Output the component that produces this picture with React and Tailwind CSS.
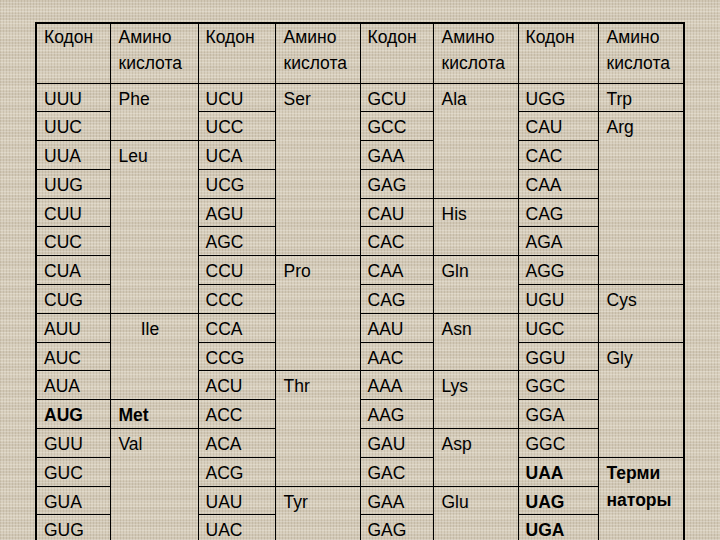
import React from "react";

const col1 = ["UUU","UUC","UUA","UUG","CUU","CUC","CUA","CUG","AUU","AUC","AUA","AUG","GUU","GUC","GUA","GUG"];
const col3 = ["UCU","UCC","UCA","UCG","AGU","AGC","CCU","CCC","CCA","CCG","ACU","ACC","ACA","ACG","UAU","UAC"];
const col5 = ["GCU","GCC","GAA","GAG","CAU","CAC","CAA","CAG","AAU","AAC","AAA","AAG","GAU","GAC","GAA","GAG"];
const col7 = ["UGG","CAU","CAC","CAA","CAG","AGA","AGG","UGU","UGC","GGU","GGC","GGA","GGC","UAA","UAG","UGA"];
const bold1 = { 11: true };
const bold7 = { 13: true, 14: true, 15: true };

const am2 = { 0: ["Phe", 2], 2: ["Leu", 6], 8: ["Ile", 3, "center"], 11: ["Met", 1, "bold"], 12: ["Val", 4] };
const am4 = { 0: ["Ser", 6], 6: ["Pro", 4], 10: ["Thr", 4], 14: ["Tyr", 2] };
const am6 = { 0: ["Ala", 4], 4: ["His", 2], 6: ["Gln", 2], 8: ["Asn", 2], 10: ["Lys", 2], 12: ["Asp", 2], 14: ["Glu", 2] };
const am8 = { 0: ["Trp", 1], 1: ["Arg", 6], 7: ["Cys", 2], 9: ["Gly", 4], 13: ["Терми наторы", 3, "bold"] };

const cellBase = "border border-black align-top pt-[4px] pb-0 leading-[23px]";

function Codon({ text, bold }) {
  return (
    <td className={bold ? cellBase + " pl-[7px] font-bold" : cellBase + " pl-[7px]"}>{text}</td>
  );
}

function Amino({ item }) {
  const [text, span, mode] = item;
  let cls = cellBase + " pl-[8px]";
  if (mode === "bold") cls = cellBase + " pl-[8px] font-bold";
  if (mode === "center") cls = cellBase + " text-center pr-[8px]";
  return (
    <td rowSpan={span} className={cls}>
      {text === "Терми наторы" ? (
        <>
          <div className="leading-[23px]">Терми</div>
          <div className="leading-[23px] mt-[4px]">наторы</div>
        </>
      ) : (
        text
      )}
    </td>
  );
}

export default function App() {
  const headers = [];
  for (let i = 0; i < 4; i++) {
    headers.push(
      <th key={"k" + i} className="border border-black align-top text-left font-normal pl-[7px] pt-0 leading-[26px]">Кодон</th>
    );
    headers.push(
      <th key={"a" + i} className="border border-black align-top text-left font-normal pl-[8px] pt-0 leading-[26px]">
        <div>Амино</div>
        <div>кислота</div>
      </th>
    );
  }
  return (
    <div className="w-[720px] h-[540px] overflow-hidden bg-[#d8cfbd] bg-[image:repeating-linear-gradient(0deg,rgba(255,255,255,0.22)_0px,rgba(255,255,255,0.22)_1px,transparent_1px,transparent_3px),repeating-linear-gradient(90deg,rgba(80,60,30,0.1)_0px,rgba(80,60,30,0.1)_1px,transparent_1px,transparent_3px),repeating-linear-gradient(0deg,rgba(80,60,30,0.05)_0px,rgba(80,60,30,0.05)_7px,transparent_7px,transparent_13px)] pt-[22px] pl-[35px]">
      <table className="table-fixed border-collapse border-2 border-black w-[650px] text-[17.5px] text-black font-['Liberation_Sans',Arial,sans-serif]">
        <colgroup>
          <col className="w-[74px]" />
          <col className="w-[88px]" />
          <col className="w-[77px]" />
          <col className="w-[85px]" />
          <col className="w-[73px]" />
          <col className="w-[85px]" />
          <col className="w-[80px]" />
          <col className="w-[86px]" />
        </colgroup>
        <thead>
          <tr className="h-[60px]">{headers}</tr>
        </thead>
        <tbody>
          {col1.map((c, i) => (
            <tr key={i} className="h-[28.8px]">
              <Codon text={c} bold={bold1[i]} />
              {am2[i] && <Amino item={am2[i]} />}
              <Codon text={col3[i]} />
              {am4[i] && <Amino item={am4[i]} />}
              <Codon text={col5[i]} />
              {am6[i] && <Amino item={am6[i]} />}
              <Codon text={col7[i]} bold={bold7[i]} />
              {am8[i] && <Amino item={am8[i]} />}
            </tr>
          ))}
        </tbody>
      </table>
    </div>
  );
}
